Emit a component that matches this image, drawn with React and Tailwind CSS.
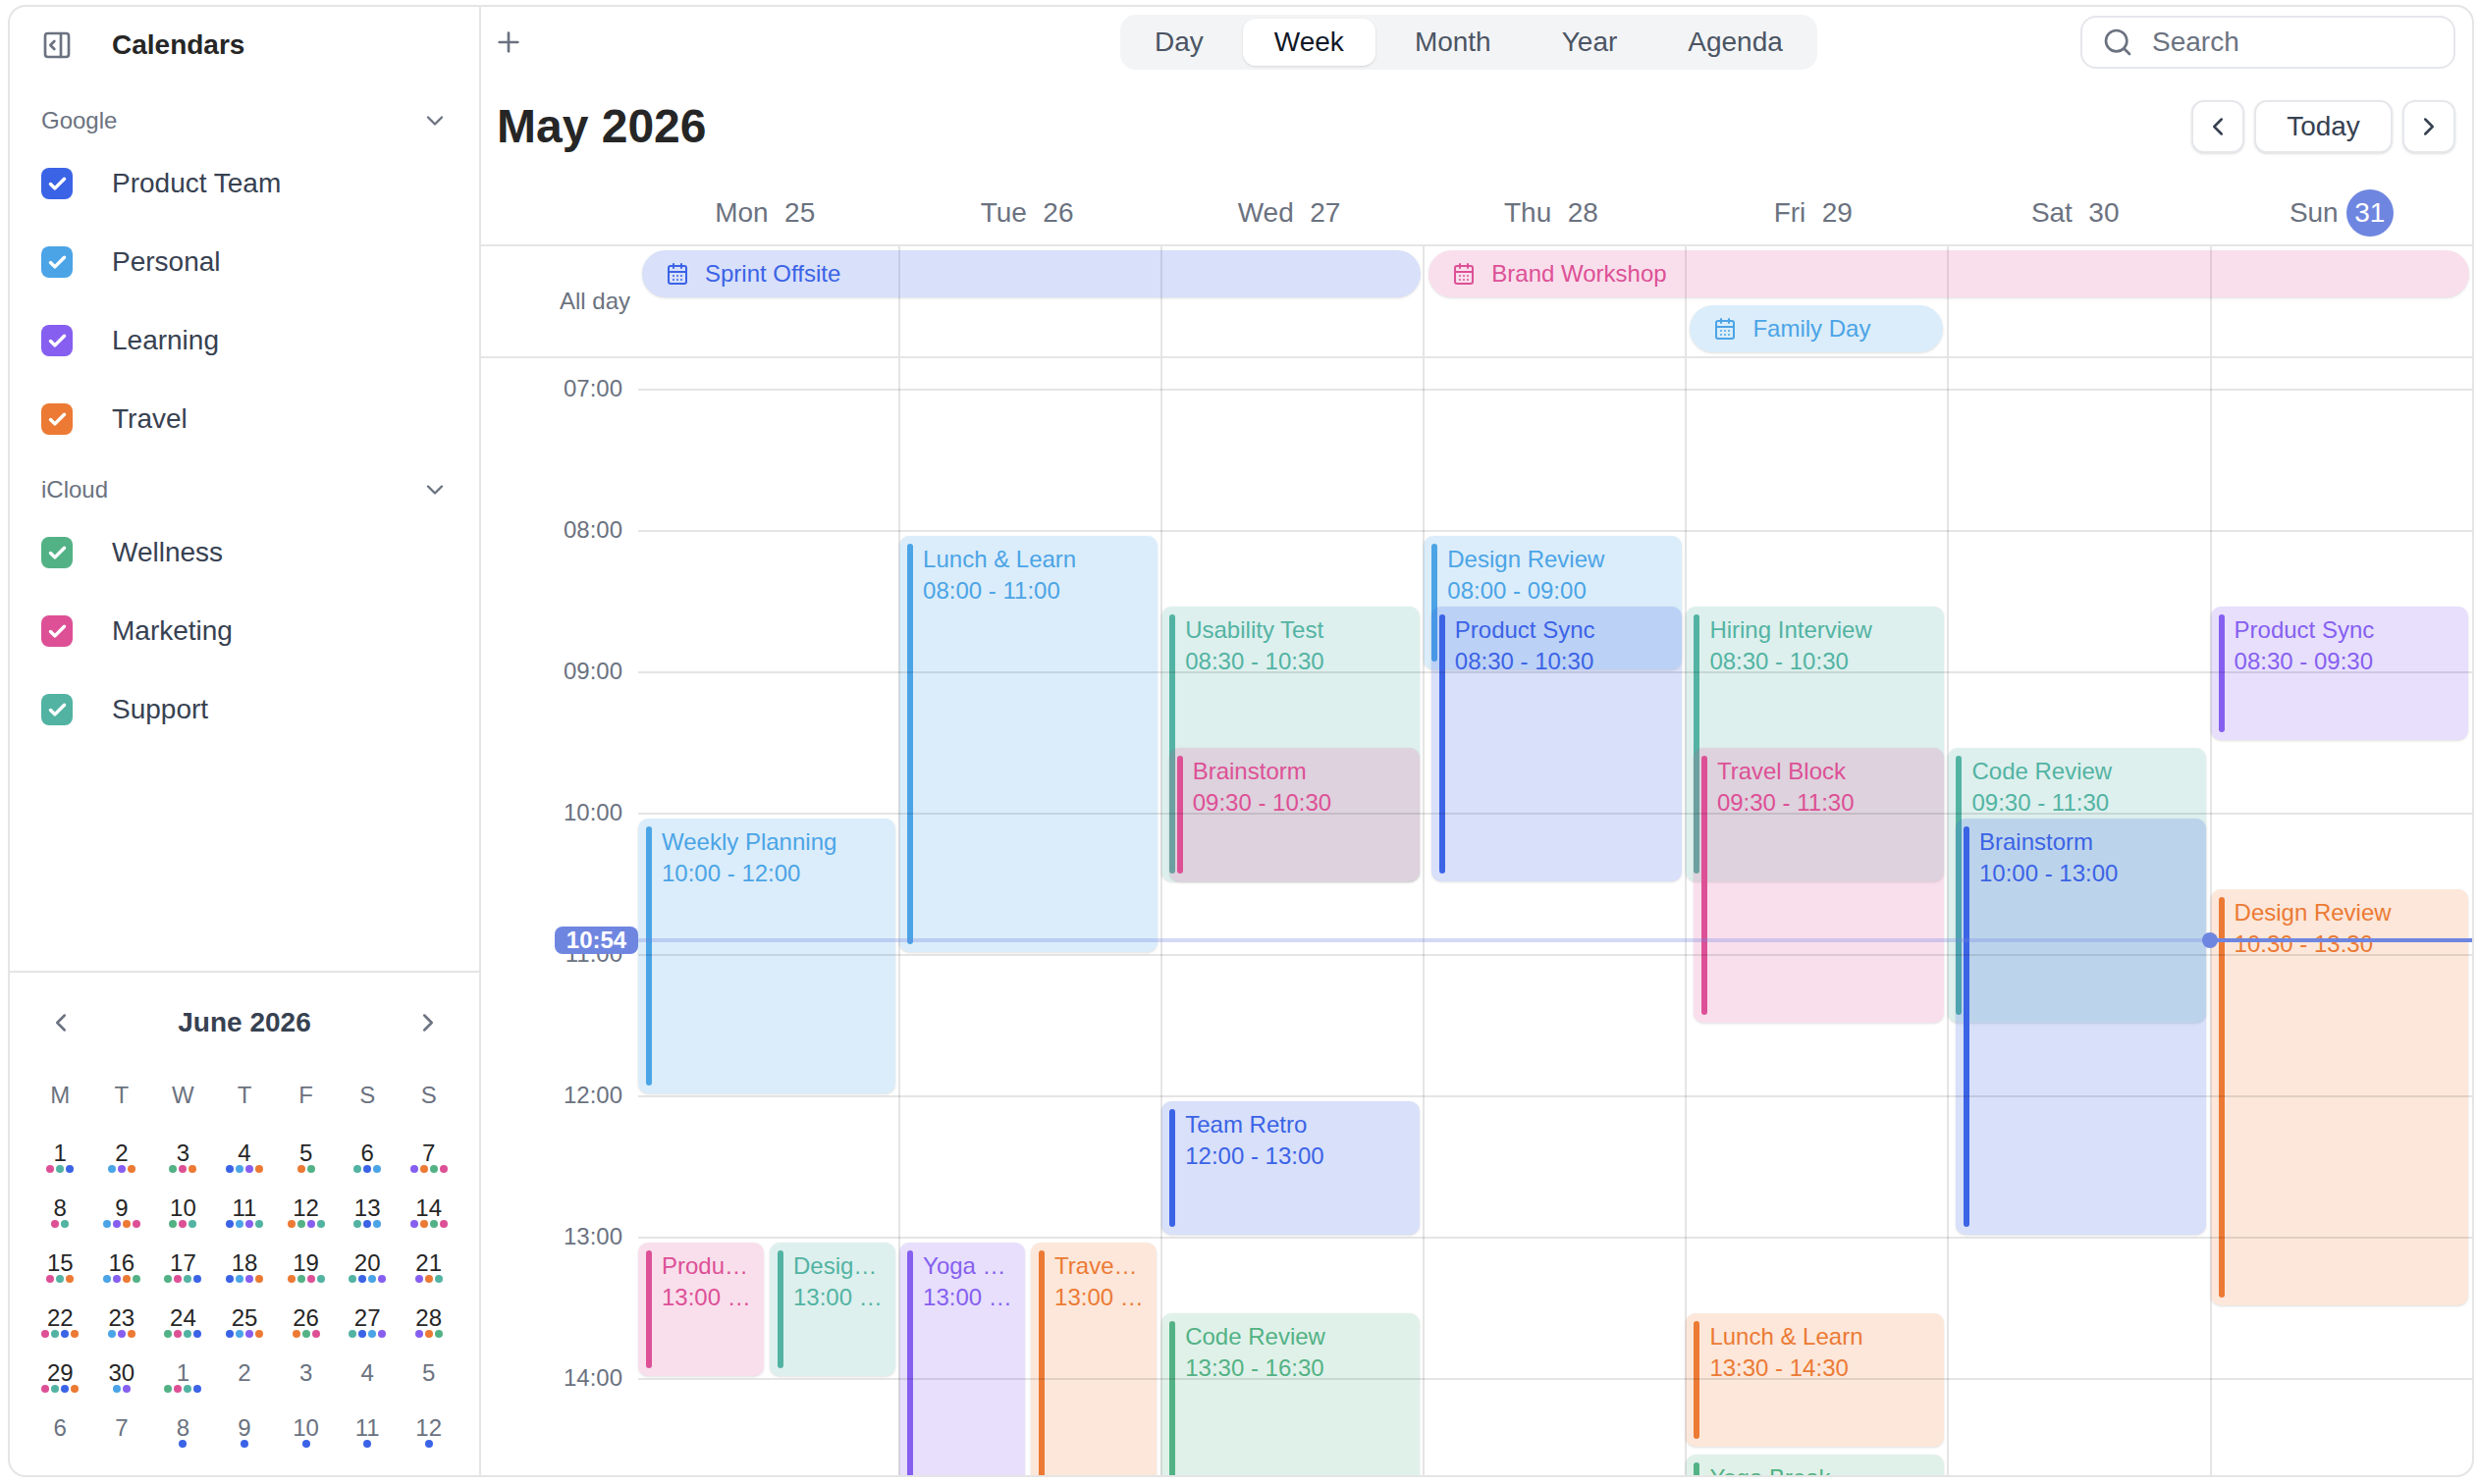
import React from "react";
import { PanelRightOpen, Plus, Search, ChevronLeft, ChevronRight, ChevronDown, Check, CalendarDays } from "lucide-react";

const C = {
  blue: { box: "bg-[#3b63e6]", soft: "bg-[#3b63e6]/20", text: "text-[#3b63e6]" },
  sky: { box: "bg-[#4ba4e6]", soft: "bg-[#4ba4e6]/20", text: "text-[#4ba4e6]" },
  purple: { box: "bg-[#865ff0]", soft: "bg-[#865ff0]/20", text: "text-[#865ff0]" },
  orange: { box: "bg-[#ec7a34]", soft: "bg-[#ec7a34]/18", text: "text-[#ec7a34]" },
  green: { box: "bg-[#53b285]", soft: "bg-[#53b285]/18", text: "text-[#53b285]" },
  pink: { box: "bg-[#dd5096]", soft: "bg-[#dd5096]/18", text: "text-[#dd5096]" },
  teal: { box: "bg-[#53b3a3]", soft: "bg-[#53b3a3]/20", text: "text-[#53b3a3]" },
};

const HOUR = 144;

const events = [
  [
    { t: "Weekly Planning", s: "10:00 - 12:00", h: 10, d: 2, c: "sky" },
    { t: "Product Sync", s: "13:00 - 14:00", h: 13, d: 1, c: "pink", slot: "L" },
    { t: "Design Review", s: "13:00 - 14:00", h: 13, d: 1, c: "teal", slot: "R" },
  ],
  [
    { t: "Lunch & Learn", s: "08:00 - 11:00", h: 8, d: 3, c: "sky" },
    { t: "Yoga Break", s: "13:00 - 15:00", h: 13, d: 2, c: "purple", slot: "L" },
    { t: "Travel Block", s: "13:00 - 15:00", h: 13, d: 2, c: "orange", slot: "R", tight: true },
  ],
  [
    { t: "Usability Test", s: "08:30 - 10:30", h: 8.5, d: 2, c: "teal" },
    { t: "Brainstorm", s: "09:30 - 10:30", h: 9.5, d: 1, c: "pink", indent: true },
    { t: "Team Retro", s: "12:00 - 13:00", h: 12, d: 1, c: "blue" },
    { t: "Code Review", s: "13:30 - 16:30", h: 13.5, d: 3, c: "green" },
  ],
  [
    { t: "Design Review", s: "08:00 - 09:00", h: 8, d: 1, c: "sky" },
    { t: "Product Sync", s: "08:30 - 10:30", h: 8.5, d: 2, c: "blue", indent: true },
  ],
  [
    { t: "Hiring Interview", s: "08:30 - 10:30", h: 8.5, d: 2, c: "teal" },
    { t: "Travel Block", s: "09:30 - 11:30", h: 9.5, d: 2, c: "pink", indent: true },
    { t: "Lunch & Learn", s: "13:30 - 14:30", h: 13.5, d: 1, c: "orange" },
    { t: "Yoga Break", s: "14:30 - 15:30", h: 14.5, d: 1, c: "green" },
  ],
  [
    { t: "Code Review", s: "09:30 - 11:30", h: 9.5, d: 2, c: "teal" },
    { t: "Brainstorm", s: "10:00 - 13:00", h: 10, d: 3, c: "blue", indent: true },
  ],
  [
    { t: "Product Sync", s: "08:30 - 09:30", h: 8.5, d: 1, c: "purple" },
    { t: "Design Review", s: "10:30 - 13:30", h: 10.5, d: 3, c: "orange" },
  ],
];

const days = [
  ["Mon", "25"],
  ["Tue", "26"],
  ["Wed", "27"],
  ["Thu", "28"],
  ["Fri", "29"],
  ["Sat", "30"],
  ["Sun", "31"],
];

const hours = ["07:00", "08:00", "09:00", "10:00", "11:00", "12:00", "13:00", "14:00"];

const google = [
  ["Product Team", "blue"],
  ["Personal", "sky"],
  ["Learning", "purple"],
  ["Travel", "orange"],
];
const icloud = [
  ["Wellness", "green"],
  ["Marketing", "pink"],
  ["Support", "teal"],
];

const P = "pink", T = "teal", B = "blue", S = "sky", U = "purple", O = "orange", G = "green";
const mini = [
  [["1", [P, T, B]], ["2", [S, U, O]], ["3", [G, P, O]], ["4", [B, S, U, O]], ["5", [O, G]], ["6", [T, B, S]], ["7", [U, O, G, P]]],
  [["8", [P, T]], ["9", [S, U, O, P]], ["10", [G, P, T]], ["11", [B, S, U, T]], ["12", [O, G, U, T]], ["13", [T, B, S]], ["14", [U, O, G, P]]],
  [["15", [P, T, O]], ["16", [S, U, O, G]], ["17", [G, P, T, B]], ["18", [B, S, U, O]], ["19", [O, G, P, T]], ["20", [T, B, S, U]], ["21", [U, O, T]]],
  [["22", [P, T, B, O]], ["23", [S, U, O]], ["24", [G, P, T, B]], ["25", [B, S, U, O]], ["26", [O, G, P]], ["27", [T, B, S, U]], ["28", [U, O, G]]],
  [["29", [P, T, B, O]], ["30", [S, U]], ["1", [G, P, T, B], true], ["2", [], true], ["3", [], true], ["4", [], true], ["5", [], true]],
  [["6", [], true], ["7", [], true], ["8", [B], true], ["9", [B], true], ["10", [B], true], ["11", [B], true], ["12", [B], true]],
];

function CalRow({ label, color }) {
  return (
    <div className="flex h-[80px] items-center gap-[40px]">
      <span className={`flex h-[32px] w-[32px] items-center justify-center rounded-[8px] ${C[color].box}`}>
        <Check size={21} strokeWidth={4} className="text-white" />
      </span>
      <span className="text-[28px] text-[#374151]">{label}</span>
    </div>
  );
}

function GroupHead({ label, className }) {
  return (
    <div className={`flex h-[40px] items-center justify-between ${className}`}>
      <span className="text-[24px] text-[#6b7280]">{label}</span>
      <ChevronDown size={28} strokeWidth={2} className="mr-[-1px] text-[#6b7280]" />
    </div>
  );
}

function Sidebar() {
  return (
    <aside className="flex h-full w-[480px] shrink-0 flex-col border-r-2 border-[#e5e5e5]">
      <div className="flex h-[78px] shrink-0 items-center gap-[40px] px-[32px]">
        <PanelRightOpen size={32} strokeWidth={2} className="text-[#6b7280]" />
        <span className="text-[28px] font-bold text-[#262626]">Calendars</span>
      </div>
      <div className="flex-1 px-[32px]">
        <GroupHead label="Google" className="mt-[18px] mb-[4px]" />
        {google.map(([l, c]) => (
          <CalRow key={l} label={l} color={c} />
        ))}
        <GroupHead label="iCloud" className="mt-[12px] mb-[4px]" />
        {icloud.map(([l, c]) => (
          <CalRow key={l} label={l} color={c} />
        ))}
      </div>
      <div className="h-[514px] shrink-0 border-t-2 border-[#e5e5e5] px-[20px] pt-[27px]">
        <div className="flex h-[48px] items-center justify-between px-[17px]">
          <ChevronLeft size={30} strokeWidth={2} className="text-[#6b7280]" />
          <span className="text-[28px] font-bold text-[#374151]">June 2026</span>
          <ChevronRight size={30} strokeWidth={2} className="text-[#6b7280]" />
        </div>
        <div className="mt-[30px] grid h-[40px] grid-cols-7 items-center text-center text-[24px] text-[#6b7280]">
          {["M", "T", "W", "T", "F", "S", "S"].map((d, i) => (
            <span key={i}>{d}</span>
          ))}
        </div>
        <div className="mt-[25px] grid grid-cols-7">
          {mini.flat().map(([n, dots, muted], i) => (
            <div key={i} className="flex h-[56px] flex-col items-center">
              <span className={`text-[24px] leading-[27px] ${muted ? "text-[#6b7280]" : "text-[#262626]"}`}>{n}</span>
              <span className="mt-[-1px] flex gap-[2px]">
                {dots.map((c, j) => (
                  <span key={j} className={`h-[8px] w-[8px] rounded-full ${C[c].box}`} />
                ))}
              </span>
            </div>
          ))}
        </div>
      </div>
    </aside>
  );
}

function Toolbar() {
  const tabs = ["Day", "Week", "Month", "Year", "Agenda"];
  return (
    <div className="flex h-[64px] shrink-0 items-start pt-[8px] pl-[17px] pr-[17px]">
      <div className="flex h-[56px] w-[22px] shrink-0 items-start justify-center">
        <Plus size={32} strokeWidth={2} className="mt-[12px] shrink-0 text-[#6b7280]" />
      </div>
      <div className="ml-[612px] flex h-[56px] items-center gap-[8px] rounded-[16px] bg-[#f3f4f6] px-[3px]">
        {tabs.map((t) =>
          t === "Week" ? (
            <span key={t} className="flex h-[48px] items-center rounded-[13px] bg-white px-[32px] text-[28px] text-[#111827] shadow-sm">
              {t}
            </span>
          ) : (
            <span key={t} className="flex h-[48px] items-center px-[32px] text-[28px] text-[#4b5563]">
              {t}
            </span>
          )
        )}
      </div>
      <div className="mt-[1px] ml-auto flex h-[54px] w-[382px] items-center gap-[19px] rounded-[16px] border-2 border-[#e5e7eb] pl-[20px]">
        <Search size={32} strokeWidth={2} className="text-[#6b7280]" />
        <span className="text-[28px] text-[#6b7280]">Search</span>
      </div>
    </div>
  );
}

function TitleRow() {
  const btn = "flex h-[54px] items-center justify-center rounded-[13px] border-2 border-[#e5e7eb] bg-white text-[#374151] shadow-sm";
  return (
    <div className="mt-[31px] flex h-[54px] shrink-0 items-center justify-between pl-[16px] pr-[17px]">
      <h1 className="text-[48px] leading-[54px] font-bold text-[#262626]">May 2026</h1>
      <div className="flex items-center gap-[10px]">
        <span className={`${btn} w-[54px]`}>
          <ChevronLeft size={30} strokeWidth={2} />
        </span>
        <span className={`${btn} w-[141px] text-[28px]`}>Today</span>
        <span className={`${btn} w-[54px]`}>
          <ChevronRight size={30} strokeWidth={2} />
        </span>
      </div>
    </div>
  );
}

function DayHeader() {
  return (
    <div className="mt-[37px] flex h-[58px] shrink-0 border-b-2 border-[#e5e5e5] pl-[160px]">
      <div className="grid h-[48px] flex-1 grid-cols-[repeat(7,266.9px)]">
        {days.map(([d, n]) => (
          <div key={d} className="flex items-center justify-center gap-[8px] text-[28px] text-[#6b7280]">
            <span>{d}</span>
            <span className={`flex h-[48px] w-[48px] items-center justify-center rounded-full ${n === "31" ? "bg-[#6f86e0] text-white" : ""}`}>{n}</span>
          </div>
        ))}
      </div>
    </div>
  );
}

function Pill({ label, color, className }) {
  return (
    <div className={`flex h-[48px] items-center gap-[16px] rounded-full pl-[24px] shadow-sm ${C[color].soft} ${C[color].text} ${className}`}>
      <CalendarDays size={24} strokeWidth={2} />
      <span className="text-[24px]">{label}</span>
    </div>
  );
}

function AllDay() {
  return (
    <div className="flex h-[114px] shrink-0 border-b-2 border-[#e5e5e5]">
      <div className="flex w-[160px] shrink-0 items-center justify-end pr-[8px] text-[24px] text-[#6b7280]">All day</div>
      <div className="relative flex-1">
        <div className="grid h-full grid-cols-[repeat(7,267.1px)]">
          {days.map(([d], i) => (
            <div key={d} className={i < 6 ? "border-r-2 border-[#e5e5e5]" : ""} />
          ))}
        </div>
        <div className="absolute top-0 left-0 grid w-[1869.7px] grid-cols-[repeat(7,267.1px)] content-start gap-y-[8px] pt-[4px]">
          <Pill label="Sprint Offsite" color="blue" className="col-span-3 col-start-1 row-start-1 mr-[4px] ml-[4px]" />
          <Pill label="Brand Workshop" color="pink" className="col-span-4 col-start-4 row-start-1 mr-[5px] ml-[4px]" />
          <Pill label="Family Day" color="sky" className="col-start-5 row-start-2 mr-[6px] ml-[3px]" />
        </div>
      </div>
    </div>
  );
}

function EventCard({ e, first }) {
  const col = C[e.c];
  const top = 37 + HOUR * (e.h - 7);
  const height = HOUR * e.d - 8;
  const edge = first ? "left-0" : "left-[-1px]";
  const pos =
    e.slot === "L"
      ? `${edge} w-[128px]`
      : e.slot === "R"
        ? first
          ? "left-[134px] w-[128px]"
          : "left-[133px] w-[128px]"
        : e.indent
          ? "left-[6.5px] right-[3.5px]"
          : `${edge} right-[3.5px]`;
  return (
    <div className={`absolute flex gap-[10px] overflow-hidden rounded-[10px] p-[8px] shadow-sm ${pos} ${col.soft}`} style={{ top, height }}>
      <span className={`w-[6px] shrink-0 rounded-full ${col.box}`} />
      <div className={`min-w-0 flex-1 text-[24px] leading-[32px] ${col.text}`}>
        <div className={`truncate ${e.tight ? "pr-[10px]" : ""}`}>{e.t}</div>
        <div className="truncate">{e.s}</div>
      </div>
    </div>
  );
}

function TimeGrid() {
  return (
    <div className="flex min-h-0 flex-1 overflow-hidden">
      <div className="w-[160px] shrink-0 pt-[15px] pr-[16px] text-right text-[24px] leading-[32px] text-[#6b7280]">
        {hours.map((h) => (
          <div key={h} className="h-[144px]">
            {h}
          </div>
        ))}
      </div>
      <div className="relative flex-1">
        <div className="grid h-full grid-cols-[repeat(7,267.1px)]">
          {events.map((list, i) => (
            <div key={i} className={`relative border-r-2 ${i < 6 ? "border-[#e5e5e5]" : "border-transparent"}`}>
              {list.map((e) => (
                <EventCard key={e.t + e.h} e={e} first={i === 0} />
              ))}
            </div>
          ))}
        </div>
        <div className="pointer-events-none absolute inset-0 pt-[31px]">
          {hours.map((h) => (
            <div key={h} className="h-[144px] border-t-2 border-[#0000001a]" />
          ))}
        </div>
        <div className="absolute top-[591px] left-0 h-[4px] w-[1602px] bg-[#6f86e0]/30" />
        <div className="absolute top-[591px] right-0 left-[1602px] h-[4px] bg-[#6f86e0]" />
        <div className="absolute top-[585px] left-[1593px] h-[16px] w-[16px] rounded-full bg-[#6f86e0]" />
        <div className="absolute top-[579px] left-[-85px] flex h-[28px] w-[85px] items-center justify-center rounded-[8px] bg-[#6f86e0] text-[24px] font-bold text-white">10:54</div>
      </div>
    </div>
  );
}

export default function App() {
  return (
    <div className="h-[1512px] w-[2524px] overflow-hidden bg-white pt-[5px] pr-[4px] pb-[7px] pl-[8px] font-['Liberation_Sans',sans-serif]">
      <div className="flex h-[1500px] overflow-hidden rounded-[18px] border-2 border-[#e5e5e5]">
        <Sidebar />
        <main className="flex h-full min-w-0 flex-1 flex-col">
          <Toolbar />
          <TitleRow />
          <DayHeader />
          <AllDay />
          <TimeGrid />
        </main>
      </div>
    </div>
  );
}
